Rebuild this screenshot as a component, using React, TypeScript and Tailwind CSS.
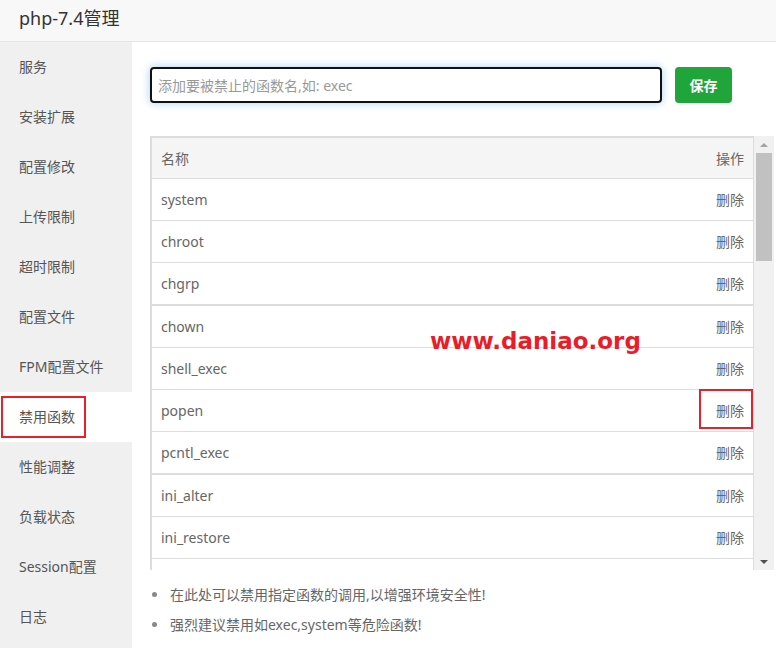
import { useState } from 'react'

const menu = ['服务', '安装扩展', '配置修改', '上传限制', '超时限制', '配置文件', 'FPM配置文件', '禁用函数', '性能调整', '负载状态', 'Session配置', '日志']

const funcs = ['system', 'chroot', 'chgrp', 'chown', 'shell_exec', 'popen', 'pcntl_exec', 'ini_alter', 'ini_restore']

const groupStart = new Set(['chown', 'ini_alter'])

export default function App() {
  const [value, setValue] = useState('')

  return (
    <div className="relative w-[776px] h-[648px] overflow-hidden bg-white text-[14px] text-[#555] font-['Noto_Sans','Noto_Sans_CJK_SC',sans-serif]">
      {/* Header */}
      <div className="h-[42px] flex items-center px-[19px] bg-[#f8f8f8] border-b border-[#e6e6e6]">
        <h1 className="text-[18px] text-[#333] m-0 font-normal leading-none -mt-[6px]">php-7.4管理</h1>
      </div>

      <div className="flex h-[606px]">
        {/* Sidebar */}
        <div className="w-[132px] shrink-0 bg-[#f0f0f0] flex flex-col">
          {menu.map((m) => (
            <div
              key={m}
              className={`h-[50px] flex items-center pl-[19px] pb-[2px] shrink-0 text-[#555] ${m === '禁用函数' ? 'bg-white' : ''}`}
            >
              {m}
            </div>
          ))}
        </div>

        {/* Content */}
        <div className="flex-1 pl-[18px] pt-[25px] flex flex-col">
          <div className="flex items-center gap-[13px]">
            <input
              value={value}
              onChange={(e) => setValue(e.target.value)}
              placeholder="添加要被禁止的函数名,如: exec"
              className="w-[512px] h-[36px] px-[6px] border-2 border-[#111] rounded-[4px] outline-none text-[14px] text-[#333] placeholder-[#999] shadow-[0_0_8px_rgba(102,175,233,0.6)]"
            />
            <button className="w-[57px] h-[36px] rounded-[4px] bg-[#20a53a] text-white text-[14px] font-bold border-none">
              保存
            </button>
          </div>

          <div className="mt-[33px] flex h-[434px] pr-[1px]">
            <div className="w-[604px] border-l-2 border-t-2 border-r border-[#ddd] overflow-hidden">
              <div className="h-[41px] bg-[#f5f5f5] border-b border-[#ddd] flex items-center justify-between px-[9px] text-[#666]">
                <span>名称</span>
                <span>操作</span>
              </div>
              {funcs.map((f) => (
                <div
                  key={f}
                  className={`flex items-center justify-between px-[9px] text-[#666] border-b border-[#ddd] ${groupStart.has(f) ? 'h-[43px] border-t' : 'h-[42px]'}`}
                >
                  <span>{f}</span>
                  <span className="cursor-pointer">删除</span>
                </div>
              ))}
            </div>
            {/* scrollbar */}
            <div className="w-[20px] bg-[#f1f1f1] flex flex-col items-center">
              <div className="h-[17px] flex items-center justify-center">
                <div className="w-0 h-0 border-l-[4px] border-r-[4px] border-b-[4px] border-l-transparent border-r-transparent border-b-[#a3a3a3]" />
              </div>
              <div className="w-[16px] h-[108px] bg-[#c1c1c1]" />
              <div className="flex-1" />
              <div className="h-[17px] flex items-center justify-center">
                <div className="w-0 h-0 border-l-[4px] border-r-[4px] border-t-[4px] border-l-transparent border-r-transparent border-t-[#505050]" />
              </div>
            </div>
          </div>

          <ul className="mt-[14px] flex flex-col gap-[10px] text-[#666]">
            {['在此处可以禁用指定函数的调用,以增强环境安全性!', '强烈建议禁用如exec,system等危险函数!'].map((t) => (
              <li key={t} className="flex items-center h-[20px]">
                <span className="w-[5px] h-[5px] rounded-full bg-[#888] ml-[2px] mr-[13px]" />
                {t}
              </li>
            ))}
          </ul>
        </div>
      </div>

      {/* annotations lying over the screenshot */}
      <div className="absolute left-[1px] top-[396px] w-[85px] h-[42px] border-2 border-[#e8202a]" />
      <div className="absolute left-[699px] top-[389px] w-[54px] h-[40px] border-2 border-[#e8202a]" />
      <div className="absolute left-[430px] top-[324px] text-[#ea1c2a] font-bold text-[23px] font-['DejaVu_Sans',sans-serif]">
        www.daniao.org
      </div>
    </div>
  )
}
